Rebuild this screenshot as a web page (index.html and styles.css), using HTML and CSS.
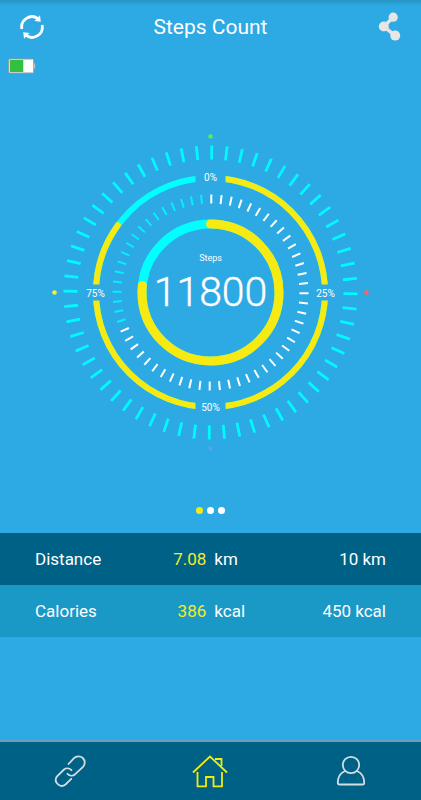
FILE: index.html
```
<!DOCTYPE html>
<html lang="en">
<head>
    <meta charset="UTF-8">
    <meta name="viewport" content="width=device-width, initial-scale=1.0">
    <title>Steps Count</title>
    <link rel="stylesheet" href="styles.css">
</head>
<body>
    <header class="top-bar">
        <button class="icon-button" type="button" aria-label="Sync">
            <svg width="26" height="26" viewBox="0 0 26 26">
                <g fill="none" stroke="#fff" stroke-width="2.8">
                    <path d="M2.9 15A10.3 10.3 0 0 1 19 4.6"/>
                    <path d="M23.1 11A10.3 10.3 0 0 1 7 21.4"/>
                </g>
                <path d="M21 1.2L21.8 7.8L15.4 7Z" fill="#fff"/>
                <path d="M5 24.8L4.2 18.2L10.6 19Z" fill="#fff"/>
            </svg>
        </button>
        <h1 class="title">Steps Count</h1>
        <button class="icon-button" type="button" aria-label="Share">
            <svg width="26" height="30" viewBox="0 0 26 30">
                <path d="M17 5.5L7.8 14.5L19.2 23.6" fill="none" stroke="#e6e6e6" stroke-width="3.4"/>
                <circle cx="17.2" cy="5.2" r="4.6" fill="#e6e6e6"/>
                <circle cx="7.8" cy="14.5" r="5" fill="#e6e6e6"/>
                <circle cx="19.2" cy="23.6" r="5" fill="#e6e6e6"/>
            </svg>
        </button>
    </header>

    <main class="content">
        <div class="battery">
            <svg width="29" height="18" viewBox="0 0 29 18" role="img" aria-label="Battery">
                <rect x="24.5" y="5" width="2.5" height="6" rx="1" fill="#fff" stroke="#999"/>
                <rect x="0.7" y="1" width="25" height="14" rx="1" fill="#fff" stroke="#999"/>
                <rect x="1.8" y="2" width="13.5" height="12" fill="#33bf3f"/>
            </svg>
        </div>

        <svg class="gauge" width="321" height="321" viewBox="-160.5 -160.5 321 321">
            <g id="outer-ticks"></g>
            <g id="inner-ticks"></g>

            <!-- day ring -->
            <g transform="rotate(-90)">
                <circle class="ring ring-rest" r="114.5" pathLength="360"/>
                <circle class="ring ring-done" r="114.5" pathLength="360" stroke-dasharray="306 54"/>
            </g>
            <rect class="gap" x="-15" y="-122" width="30" height="16"/>
            <rect class="gap" x="-15" y="106" width="30" height="16"/>
            <rect class="gap" x="-122" y="-8" width="16" height="16"/>
            <rect class="gap" x="106" y="-8" width="16" height="16"/>

            <!-- steps ring -->
            <g transform="rotate(-90)">
                <circle class="ring ring-rest ring-thick" r="68.5" pathLength="360"/>
                <circle class="ring ring-done ring-thick" r="68.5" pathLength="360" stroke-dasharray="276 84"/>
            </g>

            <circle cx="0" cy="-156" r="2.3" fill="#4cee6c"/>
            <circle cx="156" cy="0" r="2.3" fill="#ff6460"/>
            <circle cx="0" cy="156" r="2.3" fill="#4ea6f0"/>
            <circle cx="-156" cy="0" r="2.3" fill="#f7f03c"/>

            <g class="mark">
                <text x="0" y="-112">0%</text>
                <text x="115" y="4">25%</text>
                <text x="0" y="118">50%</text>
                <text x="-115" y="4">75%</text>
            </g>
            <text class="gauge-label" x="0" y="-32">Steps</text>
            <text class="gauge-value" x="0" y="13">11800</text>
        </svg>

        <div class="pager">
            <button class="dot active" type="button" aria-label="Steps"></button>
            <button class="dot" type="button" aria-label="Page 2"></button>
            <button class="dot" type="button" aria-label="Page 3"></button>
        </div>

        <table class="stats">
            <tr class="row-dark">
                <th class="name" scope="row">Distance</th>
                <td class="value">7.08</td>
                <td class="unit">km</td>
                <td class="goal">10 km</td>
            </tr>
            <tr class="row-light">
                <th class="name" scope="row">Calories</th>
                <td class="value">386</td>
                <td class="unit">kcal</td>
                <td class="goal">450 kcal</td>
            </tr>
        </table>
    </main>

    <nav class="tab-bar">
        <a class="tab" href="#link" aria-label="Link">
            <svg width="36" height="36" viewBox="0 0 36 36">
                <g fill="none" stroke="#d3dde2" stroke-width="1.8" stroke-linecap="round">
                    <path d="M16.5 11L22 5.2A6 6 0 0 1 31 13.8L23.2 21.2A5.6 5.6 0 0 1 15.5 20.8"/>
                    <path d="M19.5 17.2A5.6 5.6 0 0 0 12 16.5L4.8 23.5A6 6 0 0 0 13.5 31.5L19.3 25.8"/>
                </g>
            </svg>
        </a>
        <a class="tab" href="#home" aria-label="Home">
            <svg width="36" height="36" viewBox="0 0 36 36">
                <g fill="none" stroke="#f2ec0c" stroke-width="1.8">
                    <path d="M1 19.5L18 3.5L35 19.5"/>
                    <path d="M5.5 19V33.3H14V24H21.5V33.3H30V19"/>
                    <path d="M23 6H29.5V13"/>
                </g>
            </svg>
        </a>
        <a class="tab" href="#profile" aria-label="Profile">
            <svg width="36" height="36" viewBox="0 0 36 36">
                <g fill="none" stroke="#d3dde2" stroke-width="1.8">
                    <circle cx="18" cy="12" r="8.2"/>
                    <path d="M12 18C7 20 4.8 24.5 4.8 30Q4.8 31.5 6.5 31.5H29.5Q31.2 31.5 31.2 30C31.2 24.5 29 20 24 18"/>
                </g>
            </svg>
        </a>
    </nav>

    <script>
        const svgNS = 'http://www.w3.org/2000/svg';
        const tickCount = 60;
        const passedTicks = 42;

        // draw one ring of ticks between two radii
        function drawTicks(group, from, to, classFor) {
            for (let i = 0; i < tickCount; i++) {
                const line = document.createElementNS(svgNS, 'line');
                line.setAttribute('y1', -from);
                line.setAttribute('y2', -to);
                line.setAttribute('transform', `rotate(${i * 6 + 0.5})`);
                line.setAttribute('class', classFor(i));
                group.appendChild(line);
            }
        }

        drawTicks(document.getElementById('outer-ticks'), 133, 147, () => 'tick-outer');
        drawTicks(document.getElementById('inner-ticks'), 89, 98, (i) => i < passedTicks ? 'tick-passed' : 'tick-left');
    </script>
</body>
</html>
```
FILE: styles.css
```
* {
    box-sizing: border-box;
}
body {
    margin: 0;
    min-height: 100vh;
    display: flex;
    flex-direction: column;
    background: linear-gradient(#2794c4, #2da9e3 6px) #2da9e3;
    color: #fff;
    font-family: Roboto, sans-serif;
}
/* header */
.top-bar {
    display: flex;
    align-items: center;
    justify-content: space-between;
    height: 54px;
    padding: 0 19px;
}
.title {
    margin: 0;
    font-size: 21px;
    font-weight: 400;
    line-height: 26px;
}
.icon-button {
    display: flex;
    padding: 0;
    border: 0;
    background: none;
    cursor: pointer;
}
.content {
    flex: 1;
    display: flex;
    flex-direction: column;
}
.battery {
    display: flex;
    height: 22px;
    padding: 4px 8px;
}
/* gauge */
.gauge {
    align-self: center;
    margin-top: 56px;
}
.tick-outer {
    stroke: #00faff;
    stroke-width: 2.8;
}
.tick-passed {
    stroke: #fff;
    stroke-width: 2;
}
.tick-left {
    stroke: #04f0fc;
    stroke-width: 2;
}
.ring {
    fill: none;
    stroke-width: 6;
}
.ring-thick {
    stroke-width: 9;
}
.ring-rest {
    stroke: #00ffff;
}
.ring-done {
    stroke: #f7ea13;
    stroke-linecap: round;
}
.gap {
    fill: #2da9e3;
}
.gauge text {
    fill: #fff;
    text-anchor: middle;
}
.mark {
    font-size: 10px;
}
.gauge-label {
    font-size: 9px;
}
.gauge-value {
    font-size: 41px;
    font-weight: 300;
    stroke: #fff;
    stroke-width: 0.4;
}
/* page dots */
.pager {
    display: flex;
    justify-content: center;
    gap: 4px;
    padding: 54px 0 19px;
}
.dot {
    width: 7px;
    height: 7px;
    padding: 0;
    border: 0;
    border-radius: 50%;
    background: #fff;
}
.dot.active {
    background: #f7ea13;
}
/* distance and calories */
.stats {
    width: 100%;
    table-layout: fixed;
    border-collapse: collapse;
    font-size: 17px;
}
.stats th,
.stats td {
    height: 52px;
    padding: 0;
    font-weight: 400;
    text-align: left;
}
.stats .name {
    width: 35%;
    padding-left: 35px;
}
.stats .value {
    width: 14%;
    color: #f3ec2c;
    text-align: right;
}
.stats .unit {
    width: 20%;
    padding-left: 8px;
}
.stats .goal {
    padding-right: 35px;
    text-align: right;
}
.row-dark {
    background: #006187;
}
.row-light {
    background: #1a98c6;
}
/* bottom tabs */
.tab-bar {
    display: flex;
    height: 60px;
    border-top: 2px solid #6f9db5;
    background: #006187;
}
.tab {
    display: flex;
    flex: 1;
    align-items: center;
    justify-content: center;
}
```
